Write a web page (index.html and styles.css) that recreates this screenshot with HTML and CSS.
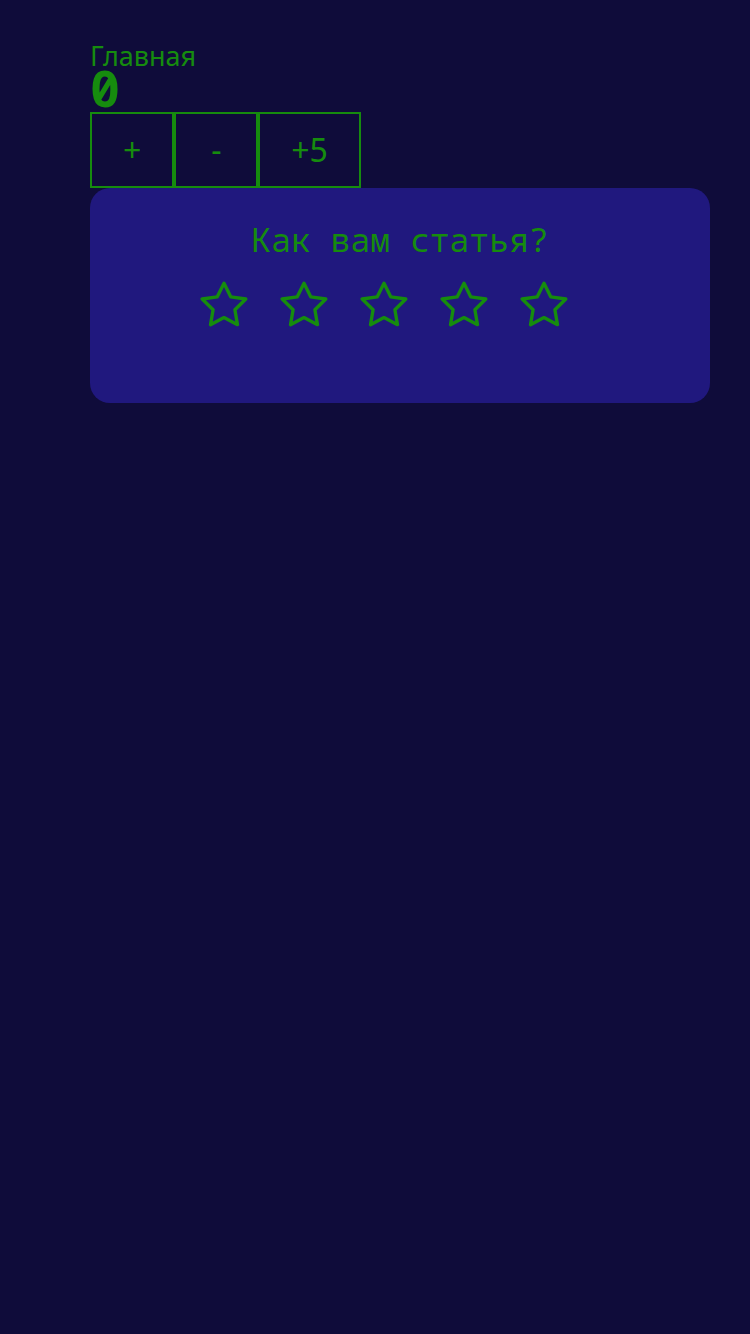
FILE: index.html
```html
<!DOCTYPE html>
<html lang="ru">
<head>
<meta charset="utf-8">
<link rel="stylesheet" href="styles.css">
</head>
<body>
<main class="page">
  <div class="label">Главная</div>
  <div class="count">0</div>
  <div class="buttons">
    <button class="btn">+</button>
    <button class="btn">-</button>
    <button class="btn">+5</button>
  </div>
  <section class="card">
    <h2 class="title">Как вам статья?</h2>
    <div class="stars">
      <svg class="star" viewBox="1 1 22 22"><path d="M12 2l3.09 6.26L22 9.27l-5 4.87 1.18 6.88L12 17.77l-6.18 3.25L7 14.14 2 9.27l6.91-1.01L12 2z"/></svg>
      <svg class="star" viewBox="1 1 22 22"><path d="M12 2l3.09 6.26L22 9.27l-5 4.87 1.18 6.88L12 17.77l-6.18 3.25L7 14.14 2 9.27l6.91-1.01L12 2z"/></svg>
      <svg class="star" viewBox="1 1 22 22"><path d="M12 2l3.09 6.26L22 9.27l-5 4.87 1.18 6.88L12 17.77l-6.18 3.25L7 14.14 2 9.27l6.91-1.01L12 2z"/></svg>
      <svg class="star" viewBox="1 1 22 22"><path d="M12 2l3.09 6.26L22 9.27l-5 4.87 1.18 6.88L12 17.77l-6.18 3.25L7 14.14 2 9.27l6.91-1.01L12 2z"/></svg>
      <svg class="star" viewBox="1 1 22 22"><path d="M12 2l3.09 6.26L22 9.27l-5 4.87 1.18 6.88L12 17.77l-6.18 3.25L7 14.14 2 9.27l6.91-1.01L12 2z"/></svg>
    </div>
  </section>
</main>
</body>
</html>
```
FILE: styles.css
```css
html, body {
  margin: 0;
  padding: 0;
  background: #0f0c3a;
}
body {
  height: 1334px;
  color: #168c0e;
  font-family: "Noto Sans", sans-serif;
}
.page {
  padding: 42px 40px 0 90px;
}
.label {
  font-size: 27px;
  line-height: 27px;
}
.count {
  font-family: "Noto Sans Mono", "DejaVu Sans Mono", monospace;
  font-weight: bold;
  font-size: 50px;
  line-height: 39px;
}
.buttons {
  display: flex;
  margin-top: 4px;
}
.btn {
  box-sizing: border-box;
  height: 76px;
  min-width: 84px;
  padding: 0 31px;
  background: transparent;
  border: 2px solid #168c0e;
  color: #168c0e;
  font-family: "Noto Sans", sans-serif;
  font-size: 32px;
  line-height: 1;
  margin: 0;
}
.card {
  background: #20187e;
  border-radius: 20px;
  padding: 35px 0 74px;
  display: flex;
  flex-direction: column;
  align-items: center;
}
.title {
  margin: 0;
  font-family: "Noto Sans Mono", "DejaVu Sans Mono", monospace;
  font-weight: normal;
  font-size: 33px;
  line-height: 33px;
}
.stars {
  display: flex;
  margin-top: 25px;
}
.star {
  display: block;
  width: 48px;
  height: 48px;
  margin-right: 32px;
  fill: none;
  stroke: #168c0e;
  stroke-width: 1.55;
  stroke-linejoin: round;
  stroke-linecap: round;
}
```
